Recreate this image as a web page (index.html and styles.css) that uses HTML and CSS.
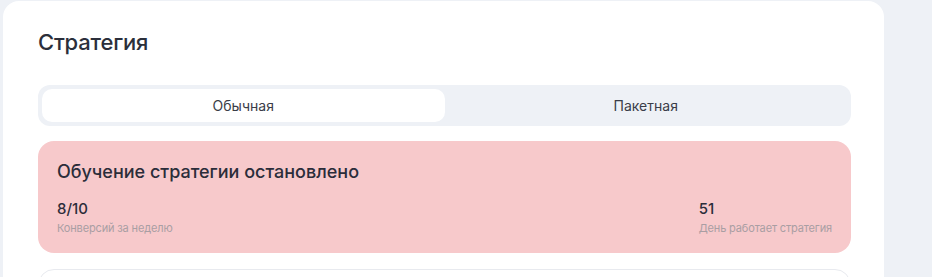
FILE: index.html
```
<!DOCTYPE html>
<html lang="ru">
<head>
    <meta charset="UTF-8">
    <title>Стратегия</title>
    <link rel="stylesheet" href="styles.css">
</head>
<body>
<div class="card">
    <h2 class="title">Стратегия</h2>
    <div class="tabs">
        <div class="tab active">Обычная</div>
        <div class="tab">Пакетная</div>
    </div>
    <div class="alert">
        <h3 class="alert-title">Обучение стратегии остановлено</h3>
        <div class="stats">
            <div class="stat">
                <div class="stat-value">8/10</div>
                <div class="stat-label">Конверсий за неделю</div>
            </div>
            <div class="stat">
                <div class="stat-value">51</div>
                <div class="stat-label">День работает стратегия</div>
            </div>
        </div>
    </div>
    <div class="next"></div>
</div>
</body>
</html>
```
FILE: styles.css
```
*{
    margin: 0;
    padding: 0;
    box-sizing: border-box;
}
body{
    background: #eef1f6;
    font-family: Inter, "Noto Sans", sans-serif;
    color: #2e3140;
    height: 277px;
    overflow: hidden;
}
.card{
    width: 881px;
    height: 276px;
    margin: 1px 0 0 3px;
    padding: 26px 33px 0 35px;
    background: #fff;
    border-radius: 16px 16px 0 0;
    overflow: hidden;
}
.title{
    font-size: 22px;
    font-weight: 500;
    line-height: 30px;
    color: #2b2f3b;
    letter-spacing: -0.2px;
}
.tabs{
    margin-top: 28px;
    height: 41px;
    padding: 4px;
    background: #eef1f6;
    border-radius: 12px;
    display: flex;
}
.tab{
    flex: 1;
    display: flex;
    align-items: center;
    justify-content: center;
    font-size: 14px;
    color: #3a3d48;
    border-radius: 10px;
}
.tab.active{
    background: #fff;
}
.alert{
    margin-top: 15px;
    height: 112px;
    background: #f7c9cb;
    border-radius: 16px;
    padding: 19px 19px 0 19px;
}
.alert-title{
    font-size: 18px;
    font-weight: 500;
    line-height: 24px;
    color: #2b2d3a;
}
.stats{
    margin-top: 14px;
    display: flex;
    justify-content: space-between;
}
.stat-value{
    font-size: 15px;
    font-weight: 500;
    line-height: 22px;
    color: #2b2d3a;
}
.stat-label{
    font-size: 11px;
    line-height: 16px;
    letter-spacing: -0.15px;
    color: #a99ea3;
}
.next{
    margin-top: 16px;
    height: 40px;
    border: 1px solid #e8eaef;
    border-radius: 16px;
}
```
